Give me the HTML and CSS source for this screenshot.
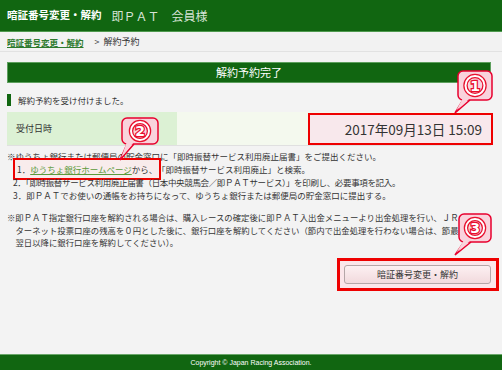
FILE: index.html
```html
<!DOCTYPE html>
<html lang="ja">
<head>
<meta charset="utf-8">
<title>暗証番号変更・解約</title>
<link rel="stylesheet" href="styles.css">
</head>
<body>
<div class="page">
  <header class="hdr">
    <span class="hdr-title">暗証番号変更・解約</span>
    <span class="hdr-user">即ＰＡＴ　会員様</span>
  </header>
  <nav class="crumb">
    <a class="crumb-link" href="#">暗証番号変更・解約</a>
    <span class="crumb-sep">&gt;</span>
    <span class="crumb-cur">解約予約</span>
  </nav>
  <main class="main">
    <h1 class="title-bar">解約予約完了</h1>
    <p class="msg"><span class="msg-mark"></span>解約予約を受け付けました。</p>
    <div class="row">
      <div class="row-label">受付日時</div>
      <div class="row-value"><div class="date-box">2017年09月13日 15:09</div></div>
    </div>
    <div class="notes">
      <p class="note">※ゆうちょ銀行または郵便局の貯金窓口に「即時振替サービス利用廃止届書」をご提出ください。</p>
      <ol class="steps">
        <li class="step"><span class="step-hl">1．<a class="step-link" href="#">ゆうちょ銀行ホームページ</a>から、</span>「即時振替サービス利用廃止」と検索。</li>
        <li class="step step-2">2．「即時振替サービス利用廃止届書（日本中央競馬会／即ＰＡＴサービス）」を印刷し、必要事項を記入。</li>
        <li class="step">3．即ＰＡＴでお使いの通帳をお持ちになって、ゆうちょ銀行または郵便局の貯金窓口に提出する。</li>
      </ol>
      <p class="note note-wide">※即ＰＡＴ指定銀行口座を解約される場合は、購入レースの確定後に即ＰＡＴ入出金メニューより出金処理を行い、ＪＲＡイン<br>ターネット投票口座の残高を０円とした後に、銀行口座を解約してください（節内で出金処理を行わない場合は、節最終日の<br>翌日以降に銀行口座を解約してください）。</p>
    </div>
    <div class="actions">
      <div class="btn-hl"><button class="btn" type="button">暗証番号変更・解約</button></div>
    </div>

    <svg class="bubble bubble-1" width="46" height="46" viewBox="0 0 46 46">
      <path class="b-shape" d="M13 31 L5 44 L20 31"/>
      <rect class="b-shape" x="8" y="2" width="34" height="29" rx="5"/>
      <path class="b-fill" d="M12.6 29.6 L6.2 41.6 L19.6 29.6 Z"/>
      <circle class="b-ring-o" cx="25" cy="16.5" r="9.5"/>
      <circle class="b-ring-i" cx="25" cy="16.5" r="9.5"/>
      <text class="b-num" x="25" y="21.5">1</text>
    </svg>
    <svg class="bubble bubble-2" width="48" height="48" viewBox="0 0 48 48">
      <path class="b-shape" d="M13 28 L6 44 L20 28"/>
      <rect class="b-shape" x="8" y="2" width="36" height="26" rx="5"/>
      <path class="b-fill" d="M12.6 26.6 L7.2 41.4 L19.6 26.6 Z"/>
      <circle class="b-ring-o" cx="26" cy="15" r="9"/>
      <circle class="b-ring-i" cx="26" cy="15" r="9"/>
      <text class="b-num" x="26" y="20">2</text>
    </svg>
    <svg class="bubble bubble-3" width="46" height="46" viewBox="0 0 46 46">
      <path class="b-shape" d="M13 30 L4 43 L20 30"/>
      <rect class="b-shape" x="8" y="2" width="32" height="28" rx="5"/>
      <path class="b-fill" d="M12.6 28.6 L5.4 40.6 L19.6 28.6 Z"/>
      <circle class="b-ring-o" cx="24" cy="16" r="9"/>
      <circle class="b-ring-i" cx="24" cy="16" r="9"/>
      <text class="b-num" x="24" y="21">3</text>
    </svg>
  </main>
  <footer class="ftr">Copyright © Japan Racing Association.</footer>
</div>
</body>
</html>
```

FILE: styles.css
```css
* { box-sizing: border-box; }
html, body { margin: 0; padding: 0; }
body {
  background: #f3f3f3;
  font-family: "Noto Sans CJK JP", "Noto Sans", sans-serif;
  color: #333;
}
.page {
  display: flex;
  flex-direction: column;
  min-height: 100vh;
}
.hdr {
  height: 32px;
  background: #116611;
  border-bottom: 1px solid #4f9a4f;
  display: flex;
  align-items: center;
  padding-left: 7px;
  gap: 10px;
}
.hdr-title {
  color: #fff;
  font-weight: bold;
  font-size: 10.5px;
  line-height: 1;
}
.hdr-user {
  color: #d8e4d8;
  font-size: 12px;
  line-height: 1;
}
.crumb {
  height: 20px;
  background: #f2f2f2;
  border-bottom: 1px solid #e2e2e2;
  display: flex;
  align-items: center;
  padding-left: 7px;
}
.crumb-link {
  color: #2d7a2d;
  font-weight: bold;
  font-size: 8.5px;
  text-decoration: underline;
}
.crumb-sep {
  font-size: 9px;
  margin: 0 4px 0 11px;
  color: #444;
}
.crumb-cur {
  font-size: 9px;
  color: #333;
}
.main {
  flex: 1;
  position: relative;
  padding: 10px 11px 0 7px;
}
.title-bar {
  margin: 0;
  height: 21px;
  background: #116611;
  border: 1px solid #5d9f5d;
  color: #fff;
  font-size: 11px;
  font-weight: normal;
  line-height: 19px;
  text-align: center;
}
.msg {
  margin: 11px 0 0;
  display: flex;
  align-items: center;
  font-size: 8.5px;
  line-height: 12px;
  height: 12px;
  color: #333;
}
.msg-mark {
  width: 4px;
  height: 12px;
  background: #116611;
  margin-right: 7px;
}
.row {
  margin-top: 6px;
  display: flex;
  height: 34px;
  border-bottom: 1px solid #e0e0e0;
}
.row-label {
  width: 170px;
  background: #dcf1d4;
  font-size: 9px;
  padding-left: 9px;
  display: flex;
  align-items: center;
}
.row-value {
  flex: 1;
  background: #f4f9ee;
  display: flex;
  justify-content: flex-end;
  align-items: flex-start;
}
.date-box {
  width: 185px;
  height: 32px;
  margin: 1px -2px 0 0;
  border: 2px solid #ee0000;
  background: #f8e8ec;
  font-size: 13.5px;
  color: #333;
  text-align: right;
  padding-right: 9px;
  line-height: 28px;
}
.notes {
  margin-top: 4px;
  font-size: 8.5px;
  line-height: 13px;
  color: #333;
}
.note { margin: 0; }
.steps {
  list-style: none;
  margin: 0;
  padding: 0 0 0 6px;
}
.step { margin: 0; }
.step-2 { letter-spacing: -0.35px; }
.step-hl {
  border: 2px solid #ee0000;
  background: #f8ecec;
  padding: 3px 2px;
}
.step-link {
  color: #5b9a3a;
  text-decoration: underline;
}
.note-wide {
  margin-top: 9px;
  font-size: 8.4px;
  padding-left: 1em;
  text-indent: -1em;
  line-height: 12.5px;
}
.actions {
  margin-top: 9px;
  display: flex;
  justify-content: flex-end;
}
.btn-hl {
  border: 3px solid #ee0000;
  background: #fbe6ea;
  padding: 4px 5px 4px 4px;
  margin-right: -8px;
}
.btn {
  display: block;
  width: 147px;
  height: 19px;
  border: 1px solid #b5a6a8;
  border-radius: 3px;
  background: linear-gradient(#fcf0f2, #f2dadd);
  font-family: "Noto Sans CJK JP", sans-serif;
  font-size: 9px;
  color: #333;
  padding: 0;
  line-height: 17px;
}
.bubble {
  position: absolute;
  overflow: visible;
}
.bubble-1 { left: 450px; top: 17px; }
.bubble-2 { left: 114px; top: 64px; }
.bubble-3 { left: 451px; top: 160px; }
.b-shape {
  fill: #f9d3dc;
  stroke: #e8002e;
  stroke-width: 1.5;
}
.b-fill { fill: #f9d3dc; }
.b-ring-o {
  fill: none;
  stroke: #e8102e;
  stroke-width: 4.5;
}
.b-ring-i {
  fill: none;
  stroke: #fff;
  stroke-width: 2;
}
.b-num {
  font-family: "DejaVu Sans", sans-serif;
  font-weight: bold;
  font-size: 14px;
  text-anchor: middle;
  fill: #fff;
  stroke: #e8102e;
  stroke-width: 2.5;
  paint-order: stroke;
}
.ftr {
  height: 16px;
  background: #116611;
  border-top: 1px solid #6aa66a;
  color: #fff;
  font-family: "Liberation Sans", sans-serif;
  font-size: 7px;
  text-align: center;
  line-height: 15px;
}
```
